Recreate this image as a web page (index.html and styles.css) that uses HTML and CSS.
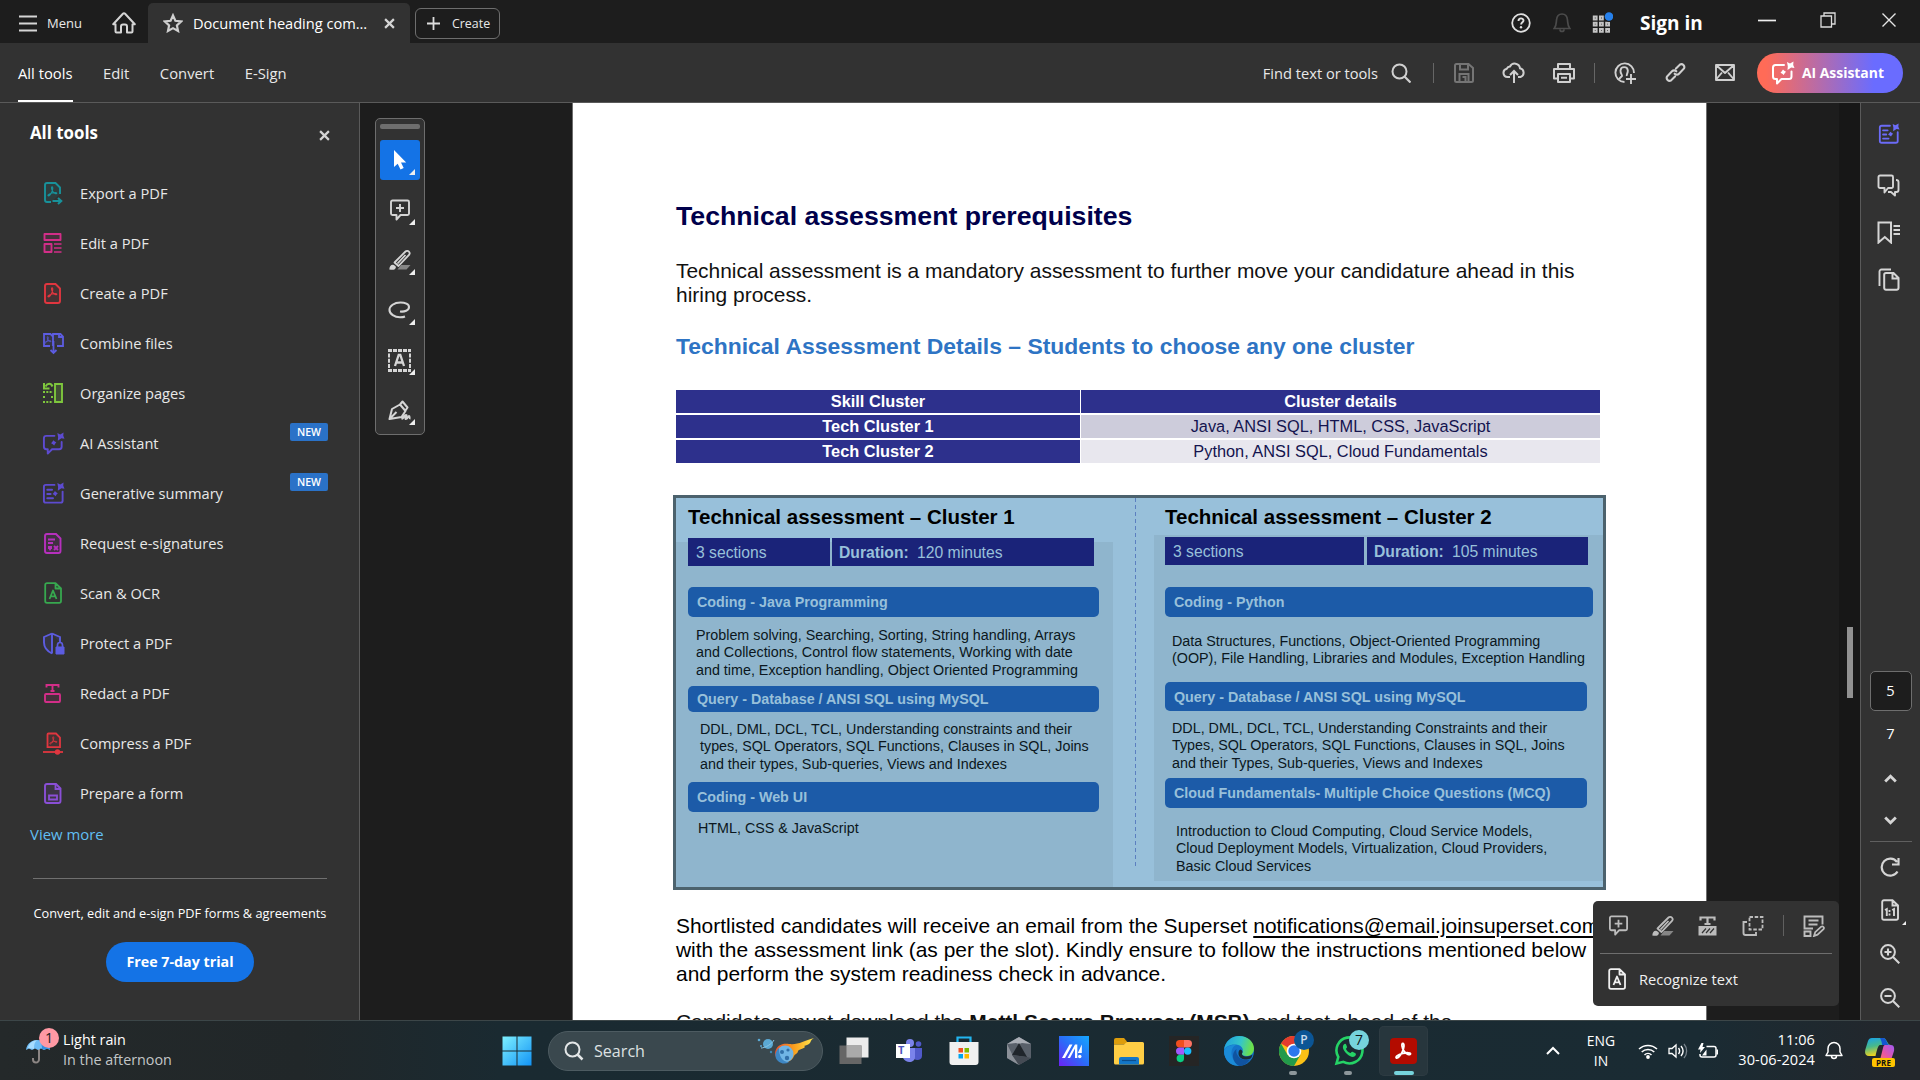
FILE: index.html
```
<!DOCTYPE html>
<html lang="en">
<head>
<meta charset="utf-8">
<title>Document heading com...</title>
<link rel="stylesheet" href="styles.css">
</head>
<body>
<svg class="sprite" aria-hidden="true">
  <symbol id="comment-add" viewBox="0 0 22 22"><path d="M3.5 1.5h15a1.5 1.5 0 0 1 1.500 1.500v11.500a1.500 1.500 0 0 1-1.500 1.500h-7l-4 4.500V16h-4a1.500 1.500 0 0 1-1.500-1.500V3a1.500 1.500 0 0 1 1.500-1.500zM11 5v8M7 9h8" fill="none" stroke="currentColor" stroke-width="1.900" stroke-linejoin="round"/></symbol>
  <symbol id="marker" viewBox="0 0 22 22"><path d="M5.500 13.500 16.500 2.500c1-1 2.500-.8 3.400.1s1 2.200.1 3.200L9.500 17z M8.500 14.500l8-8.500" fill="none" stroke="currentColor" stroke-width="1.800" stroke-linejoin="round"/><path d="M.3 20.500c.2-4 2.500-5.500 4.500-4.500s3 2.500 1 4.200c-1.500.9-3.500.5-5.500.3z" fill="currentColor"/><path d="M12 16h9.500l-4 4.500H8.500z" fill="#868686"/></symbol>
  <symbol id="ai-chat" viewBox="0 0 24 24"><path d="M13 4H4.500A2.500 2.500 0 0 0 2 6.500v9A2.500 2.500 0 0 0 4.500 18H6v4.500L10.500 18H18a2.500 2.500 0 0 0 2.500-2.500v-5" fill="none" stroke="currentColor" stroke-width="2" stroke-linejoin="round" stroke-linecap="round"/><path d="m16 1 3 1.500L22.500.5l-.3 3.500 1.300 3-3.300-.4L16.500 9l.3-3.800zM12 8.500l1.300 1.300 1.700 1-1.300 1.400-1 1.800-1.400-1.300-1.800-1 1.300-1.400z" fill="currentColor"/></symbol>
  <symbol id="ai-doc" viewBox="0 0 24 24"><path d="M13 3H4a2 2 0 0 0-2 2v14.500a2 2 0 0 0 2 2h15.500a2 2 0 0 0 2-2V10M5.500 8h5M5.500 12.500H9M5.500 17h6" fill="none" stroke="currentColor" stroke-width="2" stroke-linejoin="round" stroke-linecap="round"/><path d="m16 1 3 1.500L22.500.5l-.3 3.500 1.300 3-3.300-.4L16.500 9l.3-3.800zM13.500 9.500l1.300 1.200 1.700 1-1.300 1.400-1 1.700-1.400-1.200-1.800-1 1.300-1.400z" fill="currentColor"/></symbol>
  <symbol id="doc-a" viewBox="0 0 18 22"><path d="M3 1.200h8.500L17 6.500V19a1.800 1.800 0 0 1-1.800 1.800H3A1.800 1.800 0 0 1 1.200 19V3A1.800 1.800 0 0 1 3 1.200zM11.500 1.500v5h5M5.500 17 9 8.500l3.500 8.500M6.700 14.300h4.600" fill="none" stroke="currentColor" stroke-width="1.800" stroke-linejoin="round"/></symbol>
  <symbol id="swirl" viewBox="0 0 12 12"><path d="M5.500 1c1.300 0 .9 3.200-.4 5.800C4 9 2.500 11 1.300 10.700.2 10 2.500 8.300 5.500 7.600c2.500-.6 5.300-.6 5.200.3-.2 1.200-3 .3-4.500-2C5 4 4.500 1 5.500 1z" fill="none" stroke="currentColor" stroke-width="1.200"/></symbol>
  <symbol id="cross" viewBox="0 0 10 10"><path d="m1 1 8 8M9 1 1 9" fill="none" stroke="currentColor" stroke-width="2"/></symbol>
</svg>

<header class="titlebar">
  <div class="menu"><svg width="18" height="17" viewBox="0 0 18 17"><path d="M0 1.500h18M0 8.500h18M0 15.500h18" stroke="#d5d5d5" stroke-width="1.800"/></svg><span>Menu</span></div>
  <div class="home"><svg width="24" height="22" viewBox="0 0 24 22"><path d="m1.200 12.300 9.700-10.600a1.500 1.500 0 0 1 2.200 0l9.700 10.600h-2.300v7.200a1 1 0 0 1-1 1h-4.500v-6a2 2 0 0 0-2-2h-2a2 2 0 0 0-2 2v6H4.500a1 1 0 0 1-1-1v-7.200z" fill="none" stroke="#d5d5d5" stroke-width="2" stroke-linejoin="round"/></svg></div>
  <div class="tab"><svg width="20" height="20" viewBox="0 0 21 20"><path d="m10.500 2 2.500 5.700 6 .7-4.400 4.100 1.200 5.900-5.300-3-5.300 3 1.200-5.900L2 8.400l6-.7z" fill="none" stroke="#d0d0d0" stroke-width="2.300"/></svg><span>Document heading com...</span><svg class="tab-x" width="11" height="11"><use href="#cross"/></svg></div>
  <button class="create"><svg width="13" height="13" viewBox="0 0 13 13"><path d="M6.500 0v13M0 6.500h13" stroke="#ddd" stroke-width="1.800"/></svg><span>Create</span></button>
  <div class="window-tools">
    <span class="w40"><svg width="20" height="20" viewBox="0 0 20 20"><circle cx="10" cy="10" r="8.800" fill="none" stroke="#e0e0e0" stroke-width="1.800"/><path d="M7.500 8c0-3.500 5-3.300 5-.4 0 1.700-2.400 1.800-2.400 4" fill="none" stroke="#e0e0e0" stroke-width="1.900"/><circle cx="10" cy="14.300" r="1.200" fill="#e0e0e0"/></svg></span>
    <span class="w42"><svg width="18" height="21" viewBox="0 0 18 21"><path d="M1.200 16.500c2.300-2.800 2-5.500 2.300-8.500C3.800 4.500 6 2 9 2s5.200 2.500 5.500 6c.3 3 0 5.700 2.300 8.500zM7 17.500a2 2 0 0 0 4 0" fill="none" stroke="#4b4b4b" stroke-width="1.700"/></svg></span>
    <span class="w38"><svg width="22" height="22" viewBox="0 0 22 22"><path d="M2.800 4.600h2.800v2.800H2.800zm6.200 0h2.800v2.800H9zm-6.200 6.200h2.800v2.800H2.800zm6.200 0h2.800v2.800H9zm6.200 0H18v2.800h-2.800zM2.800 17h2.800v2.800H2.800zM9 17h2.800v2.800H9zm6.200 0H18v2.800h-2.800z" fill="none" stroke="#c4c4c4" stroke-width="2"/><circle cx="18" cy="5" r="5" fill="#1d1d1d"/><circle cx="18" cy="4.500" r="4.300" fill="#2680eb"/></svg></span>
    <b class="signin">Sign in</b>
    <span class="w61"><svg width="18" height="14"><path d="M0 7.500h18" stroke="#eee" stroke-width="1.700"/></svg></span>
    <span class="w61"><svg width="16" height="16" viewBox="0 0 16 16"><path d="M1 4h10.500v11H1zM4 4V1h11v11h-3.500" fill="none" stroke="#ddd" stroke-width="1.300"/></svg></span>
    <span class="w61"><svg width="14" height="14" viewBox="0 0 14 14"><path d="m.5.5 13 13m0-13-13 13" stroke="#e5e5e5" stroke-width="1.400"/></svg></span>
  </div>
</header>

<nav class="toolbar">
  <a class="active">All tools</a><a>Edit</a><a>Convert</a><a>E-Sign</a>
  <div class="actions">
    <span class="find">Find text or tools</span>
    <svg class="search" width="20" height="20" viewBox="0 0 20 20"><circle cx="8.500" cy="8.500" r="7" fill="none" stroke="#d0d0d0" stroke-width="2"/><path d="m13.500 13.500 6 6" stroke="#d0d0d0" stroke-width="2.200"/></svg>
    <i class="vsep"></i>
    <span class="w50 dim"><svg width="20" height="20" viewBox="0 0 20 20"><path d="M2.500 1h12L19 5v12.500A1.500 1.500 0 0 1 17.500 19h-15A1.500 1.500 0 0 1 1 17.500v-15A1.500 1.500 0 0 1 2.500 1zM6 1v5.500h8V1M5.500 19v-8h9v8M8.500 14h3v5" fill="none" stroke="currentColor" stroke-width="2"/></svg></span>
    <span class="w50"><svg width="24" height="22" viewBox="0 0 24 22"><path d="M8 15H5.500a4.200 4.200 0 0 1-.7-8.300A3.500 3.500 0 0 1 8 4.500 5.300 5.300 0 0 1 18 6.300a4.500 4.500 0 0 1 .5 8.700H16M12 21V9.500M8 13l4-4 4 4" fill="none" stroke="currentColor" stroke-width="2"/></svg></span>
    <span class="w50"><svg width="22" height="20" viewBox="0 0 22 20"><path d="M5 6V1h12v5M4.500 15.500H1V6h20v9.500h-3.500M5 11h12v8H5zM8 14.800h6" fill="none" stroke="currentColor" stroke-width="2" stroke-linejoin="round"/></svg></span>
    <i class="vsep vsep-b"></i>
    <span class="w50"><svg width="23" height="22" viewBox="0 0 23 22"><path d="M10.500 20A9.300 9.300 0 1 1 20 11M5.500 17c.5-2 2-2 2.500-3s-1.800-2.500-1.500-5.500c.3-4.500 7-4.500 7.300 0 .2 2.500-1.500 4-1 5.500M17 12v10M12 17h10" fill="none" stroke="currentColor" stroke-width="1.900"/></svg></span>
    <span class="w50"><svg width="21" height="21" viewBox="0 0 21 21"><path d="M11 6.500 15 2.500a3 3 0 0 1 4 4l-5 5.200a3 3 0 0 1-4.300 0M10 14.500 6 18.500a3 3 0 0 1-4-4L7 9.300a3 3 0 0 1 4.300 0" fill="none" stroke="currentColor" stroke-width="2.100" stroke-linecap="round"/></svg></span>
    <span class="w50"><svg width="20" height="17" viewBox="0 0 20 17"><path d="M1 1h18v15H1zl9 8 9-8M1 15.500l6-7M19 15.500l-6-7" fill="none" stroke="currentColor" stroke-width="1.900" stroke-linejoin="round"/></svg></span>
    <button class="ai-btn"><svg width="24" height="24"><use href="#ai-chat"/></svg><span>AI Assistant</span></button>
  </div>
</nav>

<main class="work">
  <aside class="tools">
    <div class="tools-head"><h2>All tools</h2><svg width="11" height="11"><use href="#cross"/></svg></div>
    <ul>
      <li><svg class="teal" width="20" height="24" viewBox="0 0 20 24"><path d="M8 21H4a2 2 0 0 1-2-2V4a2 2 0 0 1 2-2h8.500L17 6.500V13" fill="currentColor" fill-opacity=".12" stroke="currentColor" stroke-width="1.900"/><path d="M9.500 20H18m-3-3 3.300 3-3.300 3" fill="none" stroke="currentColor" stroke-width="2"/><use href="#swirl" x="4" y="5" width="11" height="11"/></svg>Export a PDF</li>
      <li><svg class="pink" width="20" height="22" viewBox="0 0 20 22"><path d="M1.500 2h16v6h-16zM1.500 12h7v8h-7z" fill="currentColor" fill-opacity=".12" stroke="currentColor" stroke-width="1.900" stroke-linejoin="round"/><path d="M11 12h7.500M11 16h7.500M11 20h7.500" stroke="currentColor" stroke-width="1.700"/></svg>Edit a PDF</li>
      <li><svg class="red" width="20" height="23" viewBox="0 0 20 23"><path d="M4 2h8.500L17 6.500V19a2 2 0 0 1-2 2H4a2 2 0 0 1-2-2V4a2 2 0 0 1 2-2z" fill="currentColor" fill-opacity=".12" stroke="currentColor" stroke-width="1.900"/><use href="#swirl" x="4" y="5" width="11" height="11"/></svg>Create a PDF</li>
      <li><svg class="indigo" width="23" height="23" viewBox="0 0 23 23"><path d="M8 14H2V2h6.500l2.500 2.500V14M11 6V2h7.500L21 4.500V14h-6" fill="currentColor" fill-opacity=".12" stroke="currentColor" stroke-width="1.800"/><path d="M11.500 9v12m-3-3 3 3 3-3M17 2v3h4" fill="none" stroke="currentColor" stroke-width="1.800"/><use href="#swirl" x="2" y="4" width="8" height="8"/></svg>Combine files</li>
      <li><svg class="green" width="22" height="22" viewBox="0 0 22 22"><path d="M13 2h7v18h-7z" fill="currentColor" fill-opacity=".2" stroke="currentColor" stroke-width="1.900"/><path d="M10.500 4.500C9 .8 5.500 1 3.500 4.500M2 1v5.500h5.500" fill="none" stroke="currentColor" stroke-width="2"/><path d="M1 10h10M1 15h2m6 0h2M1 20h10" stroke="currentColor" stroke-width="2" stroke-dasharray="2 1.300"/></svg>Organize pages</li>
      <li><svg class="violet" width="23" height="23"><use href="#ai-chat"/></svg>AI Assistant<em>NEW</em></li>
      <li><svg class="violet" width="23" height="23"><use href="#ai-doc"/></svg>Generative summary<em>NEW</em></li>
      <li><svg class="magenta" width="20" height="23" viewBox="0 0 20 23"><path d="M4 2h9l4.500 4.500V19a2 2 0 0 1-2 2H4a2 2 0 0 1-2-2V4a2 2 0 0 1 2-2z" fill="currentColor" fill-opacity=".12" stroke="currentColor" stroke-width="1.900"/><path d="M5 7.500h7M5 11h5M5 16h4m2-2 4 4m0-4-4 4" stroke="currentColor" stroke-width="1.900"/><path d="M5 14h4v2l-2 3-2-3z" fill="currentColor"/></svg>Request e-signatures</li>
      <li><svg class="emerald" width="18" height="22"><use href="#doc-a"/></svg>Scan &amp; OCR</li>
      <li><svg class="indigo" width="23" height="23" viewBox="0 0 23 23"><path d="M10 1.500 18 5v6M10 21.500c-5-2.500-8-6-8-11V5l8-3.500" fill="currentColor" fill-opacity=".12" stroke="currentColor" stroke-width="1.900"/><path d="M10 2v19.500" stroke="currentColor" stroke-width="1.900"/><path d="M14 15h8v7h-8z" fill="currentColor" stroke="currentColor"/><path d="M15.500 15v-2a2.500 2.500 0 0 1 5 0v2" fill="none" stroke="currentColor" stroke-width="1.700"/></svg>Protect a PDF</li>
      <li><svg class="pink" width="20" height="21" viewBox="0 0 20 21"><path d="M3 11h13a1 1 0 0 1 1 1v6a1 1 0 0 1-1 1H3a1 1 0 0 1-1-1v-6a1 1 0 0 1 1-1z" fill="currentColor" fill-opacity=".12" stroke="currentColor" stroke-width="1.900"/><path d="M3.500 4.500V2h12v2.500M9.500 2v6M7.500 8h4" fill="none" stroke="currentColor" stroke-width="1.900"/></svg>Redact a PDF</li>
      <li><svg class="red" width="20" height="23" viewBox="0 0 20 23"><path d="M5.500 1.500H13L17 5.500v9.700H4.500V2.500a1 1 0 0 1 1-1z" fill="currentColor" fill-opacity=".12" stroke="currentColor" stroke-width="1.800"/><path d="M0 20h20" stroke="currentColor" stroke-width="1.800"/><circle cx="14.500" cy="20" r="2.700" fill="currentColor"/><use href="#swirl" x="6" y="4" width="9" height="9"/></svg>Compress a PDF</li>
      <li><svg class="purple" width="20" height="23" viewBox="0 0 20 23"><path d="M4 2h9l4.500 4.500V19a2 2 0 0 1-2 2H4a2 2 0 0 1-2-2V4a2 2 0 0 1 2-2z" fill="currentColor" fill-opacity=".12" stroke="currentColor" stroke-width="1.900"/><path d="M12.500 2v5h5M6 13.500h8v4H6z" fill="none" stroke="currentColor" stroke-width="1.800"/></svg>Prepare a form</li>
    </ul>
    <a class="view-more">View more</a>
    <div class="promo"><p>Convert, edit and e-sign PDF forms &amp; agreements</p><button>Free 7-day trial</button></div>
  </aside>

  <section class="canvas">
    <div class="palette">
      <i class="grip"></i>
      <span class="tool on"><svg width="14" height="20" viewBox="0 0 14 20"><path d="M1 0v17l3.700-3.300 2.800 5.700 3.200-1.500-2.700-5.500h5.200z" fill="#fff"/></svg></span>
      <span class="tool"><svg width="22" height="22"><use href="#comment-add"/></svg></span>
      <span class="tool"><svg width="22" height="22"><use href="#marker"/></svg></span>
      <span class="tool"><svg width="23" height="18" viewBox="0 0 23 18"><path d="M12 10.500c4.500.6 9-1 9-4.500 0-3-4-4.500-8.500-4.500C6 1.500 1.500 5 1.500 9s5 7.500 11 7.300c2 0 3.500-.4 4.500-.8" fill="none" stroke="currentColor" stroke-width="2.100"/></svg></span>
      <span class="tool"><svg width="23" height="23" viewBox="0 0 23 23"><path d="M0 1.500h23M0 21.500h23" stroke="currentColor" stroke-width="2.800" stroke-dasharray="4 1"/><path d="M1 4.500v15M22 4.500v15" stroke="currentColor" stroke-width="2" stroke-dasharray="4 1.300"/><path d="M7 17 10.700 6h1.600L16 17M8.300 13.500h6.400" fill="none" stroke="currentColor" stroke-width="2.300"/></svg></span>
      <span class="tool"><svg width="23" height="21" viewBox="0 0 23 21"><path d="M1.500 19 4 9l8-4.500 5.500 6.500-4 6zl7-7M12 4.500 14.500 1.500l5 6-2 3M13.500 19c3-1 2.500-4 4.500-4s-2 4 0 4 2-3 3-3 0 2.500 1.500 2.500" fill="none" stroke="currentColor" stroke-width="2" stroke-linejoin="round"/></svg></span>
    </div>

    <article class="page">
      <h1>Technical assessment prerequisites</h1>
      <p class="body">Technical assessment is a mandatory assessment to further move your candidature ahead in this<br>hiring process.</p>
      <h3>Technical Assessment Details – Students to choose any one cluster</h3>
      <div class="skills">
        <b>Skill Cluster</b><b>Cluster details</b>
        <b>Tech Cluster 1</b><span class="light1">Java, ANSI SQL, HTML, CSS, JavaScript</span>
        <b>Tech Cluster 2</b><span class="light2">Python, ANSI SQL, Cloud Fundamentals</span>
      </div>
      <div class="clusters">
        <div class="cluster one">
          <h4>Technical assessment – Cluster 1</h4>
          <div class="facts"><span>3 sections</span><span><b>Duration:</b> 120 minutes</span></div>
          <h5 class="h30">Coding - Java Programming</h5>
          <p class="topics java">Problem solving, Searching, Sorting, String handling, Arrays<br>and Collections, Control flow statements, Working with date<br>and time, Exception handling, Object Oriented Programming</p>
          <h5 class="h26">Query - Database / ANSI SQL using MySQL</h5>
          <p class="topics sql">DDL, DML, DCL, TCL, Understanding constraints and their<br>types, SQL Operators, SQL Functions, Clauses in SQL, Joins<br>and their types, Sub-queries, Views and Indexes</p>
          <h5 class="h30">Coding - Web UI</h5>
          <p class="topics web">HTML, CSS &amp; JavaScript</p>
        </div>
        <div class="cluster two">
          <h4>Technical assessment – Cluster 2</h4>
          <div class="facts"><span>3 sections</span><span><b>Duration:</b> 105 minutes</span></div>
          <h5 class="h30 wide">Coding - Python</h5>
          <p class="topics python">Data Structures, Functions, Object-Oriented Programming<br>(OOP), File Handling, Libraries and Modules, Exception Handling</p>
          <h5 class="h29">Query - Database / ANSI SQL using MySQL</h5>
          <p class="topics sql2">DDL, DML, DCL, TCL, Understanding Constraints and their<br>Types, SQL Operators, SQL Functions, Clauses in SQL, Joins<br>and their Types, Sub-queries, Views and Indexes</p>
          <h5 class="h30">Cloud Fundamentals- Multiple Choice Questions (MCQ)</h5>
          <p class="topics cloud">Introduction to Cloud Computing, Cloud Service Models,<br>Cloud Deployment Models, Virtualization, Cloud Providers,<br>Basic Cloud Services</p>
        </div>
      </div>
      <p class="body mail">Shortlisted candidates will receive an email from the Superset <u>notifications@email.joinsuperset.com</u><br>with the assessment link (as per the slot). Kindly ensure to follow the instructions mentioned below<br>and perform the system readiness check in advance.</p>
      <p class="body last">Candidates must download the <b>Mettl Secure Browser (MSB)</b> and test ahead of the</p>
    </article>

    <div class="scroll"><i></i></div>

    <div class="quick">
      <div class="quick-row">
        <span><svg width="21" height="21"><use href="#comment-add"/></svg></span>
        <span><svg width="22" height="22"><use href="#marker"/></svg></span>
        <span><svg width="19" height="20" viewBox="0 0 19 20"><path d="M2.500 4.500V1.500h14v3M9.500 1.500v7M6.500 8h6" fill="none" stroke="currentColor" stroke-width="2.200"/><path d="M.5 10h18v9.500H.5z" fill="currentColor"/><path d="m4 17 4-4.500m0 4.500 4-4.500m0 4.500 4-4.500" stroke="#323232" stroke-width="1.200"/></svg></span>
        <span><svg width="22" height="22" viewBox="0 0 22 22"><path d="M7.500 2h13v12.500h-13z" fill="none" stroke="currentColor" stroke-width="1.800" stroke-dasharray="3.500 1.700"/><path d="M5 7H1.500v11a2 2 0 0 0 2 2H14v-3" fill="none" stroke="currentColor" stroke-width="1.900"/></svg></span>
        <i></i>
        <span class="form"><svg width="22" height="22" viewBox="0 0 22 22"><path d="M10 13.500H1.500V1.500h18v8M5.500 5.500h10M5.500 9.500h9M1.500 16.500h6v4.500h-6z" fill="none" stroke="currentColor" stroke-width="1.900"/><path d="m11 21 1.200-3.800 6-5.500c1.800-1 3.500 1 2.300 2.500l-6 5.500z" fill="none" stroke="currentColor" stroke-width="1.800"/></svg></span>
      </div>
      <div class="recognize"><svg width="18" height="22"><use href="#doc-a"/></svg>Recognize text</div>
    </div>
  </section>

  <aside class="rail">
    <span class="r1"><svg width="22" height="22"><use href="#ai-doc"/></svg></span>
    <hr class="short">
    <span class="r2"><svg width="23" height="23" viewBox="0 0 23 23"><path d="M3 1.500h11.500A1.500 1.500 0 0 1 16 3v9.500a1.500 1.500 0 0 1-1.500 1.500H11l-3.500 4.500V14H3a1.500 1.500 0 0 1-1.500-1.500V3A1.500 1.500 0 0 1 3 1.500zM19 6c1.500 0 2.500.7 2.500 2v8c0 1.500-.8 2-2 2H18v3.500L14 18h-3" fill="none" stroke="currentColor" stroke-width="1.900" stroke-linejoin="round"/></svg></span>
    <span class="r3"><svg width="23" height="23" viewBox="0 0 23 23"><path d="M1.500 1.500H14v20l-6.200-5.500-6.300 5.500z" fill="none" stroke="currentColor" stroke-width="2"/><path d="M16.500 5H23M16.500 9H23M16.500 13H23" stroke="currentColor" stroke-width="1.800"/></svg></span>
    <span class="r4"><svg width="22" height="23" viewBox="0 0 22 23"><path d="M1.500 18V3.500a2 2 0 0 1 2-2H13" fill="none" stroke="currentColor" stroke-width="1.900"/><path d="M8 5h7.500L20.500 10v10a1.800 1.800 0 0 1-1.800 1.800H8A1.800 1.800 0 0 1 6.200 20V6.800A1.800 1.800 0 0 1 8 5zM14.500 5.500v5H20" fill="none" stroke="currentColor" stroke-width="2"/></svg></span>
    <div class="rail-bottom">
      <b class="current">5</b>
      <div class="total">7</div>
      <span class="rc"><svg width="13" height="9" viewBox="0 0 13 9"><path d="m1.200 7.500 5.300-5.300 5.300 5.300" fill="none" stroke="currentColor" stroke-width="2.800"/></svg></span>
      <span class="rc"><svg width="13" height="9" viewBox="0 0 13 9"><path d="m1.200 1.500 5.300 5.300 5.300-5.300" fill="none" stroke="currentColor" stroke-width="2.800"/></svg></span>
      <hr>
      <span class="rz rot"><svg width="20" height="20" viewBox="0 0 20 20"><path d="M17.500 14.500a8.500 8.500 0 1 1-.5-9.500M18.500 1v6.500H12" fill="none" stroke="currentColor" stroke-width="2.200"/></svg></span>
      <span class="rz fit"><svg width="18" height="22" viewBox="0 0 18 22"><path d="M3 1.200h8.500L17 6.500V19a1.800 1.800 0 0 1-1.800 1.800H3A1.800 1.800 0 0 1 1.200 19V3A1.800 1.800 0 0 1 3 1.200zM11.500 1.500v5h5M4 11l1.800-1v7M11.200 11l1.800-1v7" fill="none" stroke="currentColor" stroke-width="1.900"/><path d="M8.500 11v2m0 1.500v2" stroke="currentColor" stroke-width="1.800"/></svg></span>
      <span class="rz"><svg width="20" height="20" viewBox="0 0 20 20"><circle cx="8" cy="8" r="6.900" fill="none" stroke="currentColor" stroke-width="2"/><path d="m13 13 6.300 6.300M8 4.500v7M4.500 8h7" stroke="currentColor" stroke-width="2.100"/></svg></span>
      <span class="rz"><svg width="20" height="20" viewBox="0 0 20 20"><circle cx="8" cy="8" r="6.900" fill="none" stroke="currentColor" stroke-width="2"/><path d="m13 13 6.300 6.300M4.500 8h7" stroke="currentColor" stroke-width="2.100"/></svg></span>
    </div>
  </aside>
</main>

<footer class="taskbar">
  <div class="weather">
    <svg width="36" height="38" viewBox="0 0 36 38"><path d="M14 22v11.500a3 3 0 0 1-6 0V32" fill="none" stroke="#8b8583" stroke-width="2"/><path d="M1 24C2 17 7 14 13 14s11 3 12 10l-3-1.500-3 1.500-3-1.500-3 1.500-3-1.500L7 24l-3-1.500z" fill="#6fbcf5"/><path d="M9 23c0-5 1-8 4-9-5 0-9 3-10 8z" fill="#a6dcff"/><path d="M17 23c0-5-1-8-4-9 6 0 11 3 12 9l-3-.5-2 1z" fill="#2f8fe3"/></svg>
    <b class="count">1</b>
    <div><span>Light rain</span><span class="soft">In the afternoon</span></div>
  </div>
  <div class="apps">
    <span class="start"><svg width="30" height="30" viewBox="0 0 30 30"><defs><linearGradient id="win" x2="1" y2="1"><stop stop-color="#7df0ff"/><stop offset="1" stop-color="#1293f5"/></linearGradient></defs><path d="M.5.5h14v14H.5zm15 0h14v14h-14zm-15 15h14v14H.5zm15 0h14v14h-14z" fill="url(#win)"/></svg></span>
    <div class="searchbox">
      <svg width="20" height="20" viewBox="0 0 20 20"><circle cx="8.500" cy="8.500" r="7" fill="none" stroke="#e3e6e7" stroke-width="2"/><path d="m13.500 13.500 5 5" stroke="#e3e6e7" stroke-width="2.500"/></svg><span>Search</span>
      <svg class="comet" width="58" height="28" viewBox="0 0 58 28"><defs><linearGradient id="fire" x2="1"><stop stop-color="#ee4f27"/><stop offset=".5" stop-color="#f9a11f"/><stop offset="1" stop-color="#ffe94f"/></linearGradient></defs><circle cx="11" cy="7" r="5" fill="#5ba9d4"/><path d="M4 11C8 11 15 7 17 3" fill="none" stroke="#8ac5e2" stroke-width="1"/><circle cx="2" cy="3" r="1.300" fill="#5ba9d4"/><circle cx="4" cy="9" r="1" fill="#5ba9d4"/><circle cx="14" cy="15" r="1.200" fill="#3f89b5"/><path d="M18 16c1-8 8-10 14-9 9 1 15-3 25-6-5 3-2 5-7 7l-3 1c3 1-2 3-5 4-2 1 0 2-3 4-2 1-2 2-3 4-4 7-18 5-18-5z" fill="url(#fire)"/><circle cx="28" cy="17" r="8.500" fill="#70b5e5"/><path d="M22 11a8.500 8.500 0 0 0 10 14c-7 0-10-6-10-14z" fill="#3e87c4"/><circle cx="25" cy="15" r="2" fill="#316fa8"/><circle cx="31" cy="13" r="1.600" fill="#316fa8"/><circle cx="30" cy="21" r="2.200" fill="#316fa8"/></svg>
    </div>
    <span class="app"><svg width="30" height="28" viewBox="0 0 30 28"><path d="M7.500.5h22v20h-22z" fill="#ececec"/><path d="M.5 8.500h22v18.500H.5z" fill="#666"/><path d="M7.500 8.500h15v12h-15z" fill="#aaa"/></svg></span>
    <span class="app"><svg width="28" height="26" viewBox="0 0 28 26"><circle cx="15" cy="5" r="4" fill="#7b83eb"/><circle cx="23.500" cy="6" r="2.800" fill="#5059c9"/><path d="M19 10h8v8c0 4-5 5-8 3z" fill="#5059c9"/><path d="M8 10h12v9c0 6-9 7-12 1z" fill="#7b83eb"/><path d="M1 6h14v14H1z" fill="#fff"/></svg><b class="teams-t">T</b></span>
    <span class="app"><svg width="30" height="30" viewBox="0 0 30 30"><path d="M8.500 6V1.500h13V6" fill="none" stroke="#22b5f0" stroke-width="2.200"/><path d="M.5 6h29v20a3 3 0 0 1-3 3h-23a3 3 0 0 1-3-3z" fill="#f0f0f0"/><path d="M9.500 12H14v4.500H9.500z" fill="#f25022"/><path d="M15.500 12H20v4.500h-4.500z" fill="#7fba00"/><path d="M9.500 18H14v4.500H9.500z" fill="#00a4ef"/><path d="M15.500 18H20v4.500h-4.500z" fill="#ffb900"/></svg></span>
    <span class="app"><svg width="28" height="30" viewBox="0 0 28 30"><path d="M14 1 26 8v14l-12 7L2 22V8z" fill="#59606a"/><path d="M14 1 26 8l-9-1-3 1-3-1-9 1z" fill="#a9adb5"/><path d="M2 8v14l12 7-6-9z" fill="#8b9098"/><path d="M14 7 22 21 7 19z" fill="#20252b"/><path d="M14 29 26 22l-4-1-15-2z" fill="#454b54"/></svg></span>
    <span class="app"><svg width="30" height="30" viewBox="0 0 30 30"><defs><linearGradient id="asus" x1="0" y1="1" x2="1" y2="0"><stop stop-color="#6c21f5"/><stop offset=".5" stop-color="#2a6df8"/><stop offset="1" stop-color="#15a8ff"/></linearGradient></defs><path d="M0 0h30v30H0z" fill="url(#asus)"/><path d="M3 22 10.500 8.500h3L6 22zM8.500 22 16 8.500h2.300V22H16v-9.500L11 22z" fill="#fff"/><path d="m18.800 17 4-8.500v8.500z" fill="#fff"/><circle cx="20.800" cy="20.500" r="1.700" fill="#fff"/></svg></span>
    <span class="app"><svg width="30" height="28" viewBox="0 0 30 28"><path d="M0 3a2 2 0 0 1 2-2h8l3 3.500v3H0z" fill="#dd9d0c"/><path d="M0 7.500h10L13 5h15.500A1.500 1.500 0 0 1 30 6.500V26a1.500 1.500 0 0 1-1.500 1.500h-27A1.500 1.500 0 0 1 0 26z" fill="#ffce45"/><path d="M5 27.500V22a2 2 0 0 1 2-2h16a2 2 0 0 1 2 2v5.500z" fill="#1377c8"/><path d="M8 23.500h14" stroke="#0b4d8c" stroke-width="1.200"/></svg></span>
    <span class="app"><svg width="30" height="30" viewBox="0 0 30 30"><path d="M0 0h30v30H0z" fill="#252525"/><path d="M15 4h-4.300a3.700 3.700 0 0 0 0 7.400H15z" fill="#f24e1e"/><path d="M15 4h4.300a3.700 3.700 0 0 1 0 7.400H15z" fill="#ff7262"/><path d="M15 11.400h-4.300a3.700 3.700 0 0 0 0 7.400H15z" fill="#a259ff"/><circle cx="18.700" cy="15.100" r="3.700" fill="#1abcfe"/><path d="M15 18.800h-4.300a3.700 3.700 0 1 0 4.300 3.700z" fill="#0acf83"/></svg></span>
    <span class="app"><svg width="30" height="30" viewBox="0 0 30 30"><defs><linearGradient id="edge" x2="1" y2=".2"><stop stop-color="#1e9de0"/><stop offset=".6" stop-color="#35c6c9"/><stop offset="1" stop-color="#6be04b"/></linearGradient></defs><circle cx="15" cy="15" r="15" fill="#1474ca"/><path d="M0 14C1 5 8 0 15 0c9 0 15 6 15 12.500 0 5-3.500 7.500-7.500 7.500-3 0-5-1-4.500-2.500 2-2.500 1-8.500-6-9C6 8 1 11 0 14z" fill="url(#edge)"/><path d="M12 9C5 12 6 25 16 29.500 8 31 0 25 0 15c1-4 6-6.500 12-6z" fill="#1b8bd8"/><path d="M18 17.500c-.5 1.500 1.500 3 4.500 3 2.500 0 4.500-.8 6-2-.3 1.500-1 3-1.800 4C22 25 14.500 23 14.500 17.500c0-2 .5-3.500 2-4 2 .5 2.500 2.500 1.500 4z" fill="#1b2c34"/><path d="M12.500 13C11 19 17 26 26 23.500 23 28 19 30 15 30 8 26 7 17 12.500 13z" fill="#1053a0"/></svg></span>
    <span class="app run"><svg width="30" height="30" viewBox="0 0 30 30"><circle cx="15" cy="15" r="15" fill="#fbc116"/><path d="M15 15 2 7.500A15 15 0 0 1 28 7.500H15z" fill="#e33b2e"/><path d="M2 7.500A15 15 0 0 0 15 30l6.500-11.200L8.500 18.700z" fill="#229a4b"/><circle cx="15" cy="15" r="7.300" fill="#fff"/><circle cx="15" cy="15" r="5.700" fill="#2c78ee"/></svg><b class="badge navy">P</b></span>
    <span class="app run"><svg width="30" height="30" viewBox="0 0 30 30"><path d="M2.500 27.500 4.300 21A13 13 0 1 1 9.300 25.800z" fill="none" stroke="#25d366" stroke-width="2.600"/><path d="M10.500 8c-3 2-1.500 6 2 9.500s7.500 4.500 9 2c.8-1.500.5-2-.5-2.500l-2.500-1.200c-1-.4-1.200.5-2 1.300-1.500-.2-4.300-2.800-4.600-4.300.8-.8 1.400-1.200 1-2.200L12 8.300c-.3-.7-.9-.7-1.500-.3z" fill="#25d366"/></svg><b class="badge aqua">7</b></span>
    <span class="app open"><svg width="27" height="26" viewBox="0 0 27 26"><rect width="27" height="26" rx="4" fill="#b30b00"/><use href="#swirl" x="4.500" y="4" width="18" height="18" color="#fff"/></svg></span>
  </div>
  <div class="tray">
    <svg class="up" width="14" height="9" viewBox="0 0 14 9"><path d="m1 8 6-6 6 6" fill="none" stroke="#fff" stroke-width="2"/></svg>
    <div class="lang"><span>ENG</span><span>IN</span></div>
    <svg class="wifi" width="20" height="16" viewBox="0 0 20 16"><path d="M1 6a13 13 0 0 1 18 0M3.700 9a9 9 0 0 1 12.600 0M6.500 12a5 5 0 0 1 7 0" fill="none" stroke="#fff" stroke-width="1.500"/><circle cx="10" cy="14" r="1.900" fill="#fff"/></svg>
    <svg class="sound" width="20" height="16" viewBox="0 0 20 16"><path d="M1 5.500h3L8 2v12l-4-3.500H1z" fill="none" stroke="#fff" stroke-width="1.300"/><path d="M10.500 5c1.500 2 1.500 4 0 6M13 3c2.500 3 2.500 7 0 10" fill="none" stroke="#fff" stroke-width="1.400"/><path d="M16 1c3.500 4 3.500 10 0 14" fill="none" stroke="#76818a" stroke-width="1.300"/></svg>
    <svg class="battery" width="21" height="18" viewBox="0 0 21 18"><path d="M8.500 4.500H16a2 2 0 0 1 2 2V13a2 2 0 0 1-2 2H4a2 2 0 0 1-2-2v-1" fill="none" stroke="#fff" stroke-width="1.500"/><path d="M18.500 7.500H20v5h-1.500zM3.500 1 0 7.500h2.500L2 11l5-6H4.500L5.500 1zM4 13.500l4.500-6v6z" fill="#fff"/></svg>
    <div class="clock"><span>11:06</span><span>30-06-2024</span></div>
    <svg class="bell" width="18" height="19" viewBox="0 0 18 19"><path d="M1 14.500 3 11V7.500a6 6 0 0 1 12 0V11l2 3.500zM6.500 15a2.500 2.500 0 0 0 5 0" fill="none" stroke="#fff" stroke-width="1.500" stroke-linejoin="round"/></svg>
    <span class="copilot"><svg width="30" height="28" viewBox="0 0 30 28"><defs><linearGradient id="cpa" x2=".3" y2="1"><stop stop-color="#16a2ee"/><stop offset=".5" stop-color="#48b98b"/><stop offset="1" stop-color="#f6d319"/></linearGradient><linearGradient id="cpb" y1="1" x2="1" y2="0"><stop stop-color="#fb8b46"/><stop offset=".5" stop-color="#e756a4"/><stop offset="1" stop-color="#a05af5"/></linearGradient></defs><path d="M7 1h11c4 0 4 7 8 7H15c-2 0-3 5-4.500 11H4c-4 0-4.500-3-3.500-7L3 4c.7-2 2-3 4-3z" fill="url(#cpa)"/><path d="M15 1h3c4 0 3.500 7 7 7h-8c0-3-1-5-2-7z" fill="#1556d0"/><path d="M20 8h6c3 0 3.500 3 3 6l-2 6c-1 4-2 6-5 6H11c3 0 4-3 5-7l2-8c.4-2 1-3 2-3z" fill="url(#cpb)"/></svg><b>PRE</b></span>
  </div>
</footer>
</body>
</html>
```
FILE: styles.css
```
* { box-sizing: border-box; }
html, body { height: 100%; }
body {
  margin: 0;
  display: flex;
  flex-direction: column;
  overflow: hidden;
  background: #1d1d1d;
  color: #e8e8e8;
  font: 14.65px/20px "Open Sans", "Noto Sans", sans-serif;
}
svg { display: block; flex: none; }
button { border: 0; padding: 0; font: inherit; color: inherit; }
h1, h2, h3, h4, h5, p, ul { margin: 0; padding: 0; }
i, em { font-style: normal; }
.sprite { position: absolute; width: 0; height: 0; }

/* Title bar */
.titlebar { display: flex; height: 43px; flex: none; background: #1d1d1d; }
.menu { display: flex; align-items: center; width: 112px; padding: 3px 0 0 19px; gap: 10px; font-size: 13px; }
.home { display: flex; align-items: center; width: 36px; padding-top: 2px; }
.tab { display: flex; align-items: center; width: 262px; margin-top: 3px; padding: 0 0 0 15px; border-radius: 5px 5px 0 0; background: #323232; color: #fff; }
.tab span { width: 192px; padding-left: 10px; white-space: nowrap; letter-spacing: -.03px; }
.tab-x { margin-left: 9px; color: #d5d5d5; }
.create { display: flex; align-items: center; gap: 12px; width: 85px; height: 31px; margin: 8px 0 0 5px; padding-left: 11px; border: 1px solid #6e6e6e; border-radius: 6px; background: transparent; font-size: 12.400px; }
.window-tools { display: flex; align-items: center; margin-left: auto; padding: 2px 1px 0 0; }
.window-tools span { display: flex; justify-content: center; }
.w40 { width: 40px; }
.w42 { width: 42px; }
.w38 { width: 38px; }
.w61 { width: 61px; padding-bottom: 5px; }
.signin { width: 115px; padding-left: 19px; font-size: 19px; color: #fff; white-space: nowrap; }

/* Toolbar */
.toolbar { display: flex; height: 60px; flex: none; padding-left: 18px; background: #323232; border-bottom: 1px solid #5a5a5a; }
.toolbar a { height: 59px; padding-top: 20px; margin-right: 30.500px; font-size: 14.800px; }
.toolbar .active { color: #fff; box-shadow: inset 0 -2px #fff; }
.actions { display: flex; align-items: center; margin-left: auto; padding-right: 17px; color: #d0d0d0; }
.find { color: #e8e8e8; margin-right: 13px; }
.search { margin-right: 18px; }
.vsep { width: 1px; height: 20px; margin: 0 5px 0 4px; background: #666; }
.vsep-b { margin: 0 5px; }
.w50 { display: flex; justify-content: center; width: 50px; }
.dim { color: #757575; }
.ai-btn { display: flex; align-items: center; gap: 7px; width: 146px; height: 40px; margin-left: 7px; padding-left: 14px; border-radius: 20px; background: linear-gradient(90deg, #ff6b57 6%, #6a6cff 80%); color: #fff; font-weight: 700; font-size: 13.900px; }
.ai-btn span { padding-top: 1px; }

/* Work area */
.work { display: flex; flex: 1; min-height: 0; }
.tools { display: flex; flex-direction: column; width: 360px; border-right: 1px solid #5a5a5a; background: #323232; }
.tools-head { display: flex; justify-content: space-between; padding: 18px 29px 0 30px; height: 65px; color: #d5d5d5; }
.tools-head h2 { font-size: 16.850px; line-height: 24px; color: #fff; }
.tools-head svg { margin-top: 9px; }
.tools ul { list-style: none; }
.tools li { display: grid; grid-template-columns: 46px 1fr 38px; align-items: center; height: 50px; padding: 0 31px 0 34px; white-space: nowrap; }
.tools li svg { justify-self: center; margin-right: 8px; }
.tools em { height: 18px; margin-top: -23px; border-radius: 2px; background: #2a72c8; color: #fff; font-size: 10.500px; font-weight: 600; line-height: 18px; text-align: center; }
.teal { color: #18919a; } .pink { color: #d22e88; } .red { color: #e0363f; } .indigo { color: #5c5ce0; }
.green { color: #7ec73d; } .violet { color: #5d4bd0; } .magenta { color: #b630bd; } .emerald { color: #37a84f; } .purple { color: #8a4fd6; }
.view-more { margin: 6px 0 0 30px; color: #61bff2; font-size: 14.900px; }
.promo { margin: 34px 32px 0 33px; border-top: 1px solid #707070; text-align: center; color: #fff; }
.promo p { margin-top: 24px; font-size: 12.750px; white-space: nowrap; }
.promo button { width: 148px; height: 40px; margin-top: 19px; border-radius: 20px; background: #1473e6; font-size: 14.250px; font-weight: 700; }

.canvas { position: relative; display: flex; flex: 1; overflow: hidden; background: #1d1d1d; }
.palette { display: flex; flex-direction: column; align-items: center; width: 50px; height: 317px; margin: 15px 0 0 15px; padding-top: 5px; border: 1px solid #6e6e6e; border-radius: 5px; background: #323232; color: #d5d5d5; }
.grip { flex: none; width: 40px; height: 5px; margin-bottom: 11px; border-radius: 2px; background: #6e6e6e; }
.tool { position: relative; display: flex; align-items: center; justify-content: center; width: 40px; height: 40px; margin-bottom: 10px; padding-right: 1px; border-radius: 3px; flex: none; }
.tool::after, .fit::after { content: ""; position: absolute; right: 5px; bottom: 5px; border: 3px solid transparent; border-right-color: #eee; border-bottom-color: #eee; }
.on { background: #1473e6; }

/* Document page */
.page { width: 1135px; margin-left: 147px; padding: 97px 0 0 103px; border: solid #6e6e6e; border-width: 0 1px; background: #fff; color: #111; font-family: "Liberation Sans", Arial, sans-serif; white-space: nowrap; overflow: hidden; }
.page h1 { font-size: 26.700px; line-height: 32px; color: #00004b; }
.body { margin-top: 27px; font-size: 20.950px; line-height: 24px; }
.page h3 { margin-top: 25px; font-size: 22.920px; line-height: 28px; color: #2e74c4; }
.skills { display: grid; grid-template-columns: 404px 519px; grid-template-rows: 23px 23px 23px; gap: 2px 1px; margin-top: 30px; width: 924px; font-size: 16.350px; line-height: 23px; text-align: center; }
.skills b { background: #2d308c; color: #fff; }
.skills span { color: #14144f; }
.light1 { background: #cdccdb; }
.light2 { background: #e8e7ee; }
.clusters { display: flex; width: 933px; height: 395px; margin: 32px 0 0 -3px; border: 3px solid #4c626d;
  background: linear-gradient(#8fb5cd, #8fb5cd) 0 44px / 437px 345px no-repeat, linear-gradient(#8fb5cd, #8fb5cd) 478px 37px / 449px 346px no-repeat,
    repeating-linear-gradient(#5b7fc0 0 4px, transparent 4px 7px) 459px 0 / 1px 370px no-repeat, #98c0da; }
.cluster { padding-top: 6px; color: #0b1720; }
.one { width: 476px; padding-left: 12px; }
.two { padding-left: 13px; }
.cluster h4 { font-size: 20.500px; line-height: 26px; color: #000; }
.facts { display: grid; grid-template-columns: 142px 262px; gap: 2px; margin-top: 8px; font-size: 15.700px; line-height: 30px; color: #98c0da; }
.facts span { height: 28px; padding-left: 8px; background: #1a2379; }
.facts b { margin-right: 4px; }
.facts span + span { padding-left: 7px; }
.two .facts { grid-template-columns: 199px 221px; gap: 3px; margin-top: 7px; }
.cluster h5 { width: 411px; padding-left: 9px; border-radius: 5px; background: #1c5ba8; color: #98c0da; font-size: 14.300px; }
.two h5 { width: 422px; }
.cluster .wide { width: 428px; }
.h30 { height: 30px; line-height: 30px; }
.h29 { height: 29px; line-height: 30px; }
.h26 { height: 26px; line-height: 26px; }
.facts + .h30 { margin-top: 21px; }
.two .facts + .h30 { margin-top: 22px; }
.topics { font-size: 14.320px; line-height: 17.300px; }
.java { height: 69px; padding: 10px 0 0 8px; }
.sql { height: 70px; padding: 9px 0 0 12px; }
.web { padding: 8px 0 0 10px; }
.python { height: 65px; padding: 16px 0 0 7px; }
.sql2 { height: 67px; padding: 9px 0 0 7px; }
.cloud { padding: 15px 0 0 11px; }
.mail { margin-top: 24px; color: #000; }
.mail u { text-underline-offset: 3px; text-decoration-thickness: 2px; }
.last { margin-top: 24px; }

.scroll { width: 21px; margin-left: auto; padding: 524px 0 0 8px; background: #171717; }
.scroll i { display: block; width: 6px; height: 71px; background: #919191; }

/* Floating quick actions over the page */
.quick { position: absolute; left: 1233px; top: 798px; width: 246px; height: 105px; padding: 0 7px; border-radius: 5px; background: #323232; color: #bcbcbc; }
.quick-row { display: flex; align-items: center; height: 53px; padding: 0 0 3px 0; border-bottom: 1px solid #6e6e6e; }
.quick-row span { display: flex; flex: none; justify-content: center; width: 45.300px; }
.quick-row span:first-child { width: 36px; margin-right: 4px; }
.quick-row i { flex: none; width: 1px; height: 21px; margin-left: 7px; background: #606060; }
.quick-row .form { width: 48px; padding-left: 12px; }
.recognize { display: flex; align-items: center; gap: 13px; height: 50px; padding-left: 8px; color: #f0f0f0; }

/* Right rail */
.rail { display: flex; flex-direction: column; align-items: center; width: 60px; border-left: 1px solid #5a5a5a; background: #323232; color: #d5d5d5; padding-top: 20px; }
.rail span { position: relative; display: flex; justify-content: center; align-items: center; width: 54px; margin-right: 4px; }
.r1 { height: 22px; color: #6b6bf7; }
.rail hr { width: 42px; height: 1px; margin: 0; border: 0; background: #606060; }
.rail .short { width: 27px; margin: 15px 0 14px; }
.r2 { height: 23px; }
.r3 { height: 23px; margin-top: 24px; }
.r4 { height: 23px; margin-top: 24px; }
.rail-bottom { display: flex; flex-direction: column; align-items: center; margin-top: 380px; color: #d5d5d5; }
.rail-bottom span { margin-right: 1px; }
.current { width: 42px; height: 40px; border: 1px solid #6e6e6e; border-radius: 5px; background: #1d1d1d; color: #fff; font-weight: 400; line-height: 37px; text-align: center; }
.total { height: 46px; line-height: 44px; color: #fff; }
.rc { height: 42px; }
.rot { height: 49px; }
.fit { height: 38px; margin-bottom: 3px; }
.rz:nth-last-child(-n+2) { height: 44px; }
.fit::after { right: 11px; bottom: 4px; border-width: 2.500px; }

/* Taskbar */
.taskbar { display: flex; align-items: flex-start; height: 60px; flex: none; border-top: 1px solid #3c4648; background: linear-gradient(90deg, #24292a 0, #212729 300px, #1a2a31 500px, #1a2b33 1700px, #23272c 1900px); color: #fff; font-size: 14.350px; line-height: 20px; }
.weather { position: relative; display: flex; width: 502px; height: 59px; padding: 5px 0 0 25px; }
.weather > div { display: grid; margin: 4px 0 0 2px; align-content: start; }
.weather span, .tray span { white-space: nowrap; }
.soft { color: #c2c6c7; }
.count { position: absolute; left: 39px; top: 7px; width: 20px; height: 20px; border-radius: 50%; background: #ff99a4; color: #1b1b1b; font-weight: 400; text-align: center; }
.apps { display: flex; align-items: center; height: 59px; }
.start { width: 46px; }
.searchbox { display: flex; align-items: center; width: 275px; height: 40px; margin-right: 3px; padding-left: 15px; border: 1px solid #4d5b61; border-radius: 20px; background: #3a484e; color: #dde1e2; font-size: 16.100px; }
.searchbox span { width: 173px; padding-left: 10px; }
.app { position: relative; display: flex; align-items: center; justify-content: center; width: 49px; height: 50px; margin: 0 3px; border-radius: 5px; }
.open { background: #27363d; box-shadow: inset 0 0 0 1px #2d3b42; }
.run::after, .open::after { content: ""; position: absolute; bottom: 1px; left: 20px; width: 8px; height: 4px; border-radius: 2px; background: #8d979b; }
.open::after { left: 15px; width: 20px; background: #76d3dc; }
.badge { position: absolute; left: 25px; top: 4px; width: 20px; height: 20px; border-radius: 50%; font-size: 12px; text-align: center; line-height: 20px; }
.navy { background: #0b5595; color: #c8dcec; font-weight: 600; }
.aqua { background: #76d3dc; color: #10181b; font-weight: 400; font-size: 14px; }
.teams-t { position: absolute; left: 14px; top: 14px; color: #4b53bc; font-size: 11px; }
.tray { display: flex; margin-left: auto; height: 59px; align-items: center; }
.lang, .clock { display: grid; margin-top: -1px; }
.lang { width: 30px; margin: 0 0 0 26px; text-align: center; font-size: 13.900px; }
.wifi { margin-left: 22px; }
.sound { margin-left: 10px; }
.battery { margin-left: 10px; }
.clock { width: 77px; margin-left: 19px; text-align: right; font-size: 14.500px; letter-spacing: .1px; }
.clock span { justify-self: end; }
.bell { margin-left: 10px; }
.copilot { position: relative; margin: 0 25px 0 22px; }
.copilot b { position: absolute; left: 7px; bottom: -2px; width: 23px; height: 9px; border-radius: 2px; background: #ffc300; color: #111; font-size: 8px; line-height: 9px; text-align: center; }
```
